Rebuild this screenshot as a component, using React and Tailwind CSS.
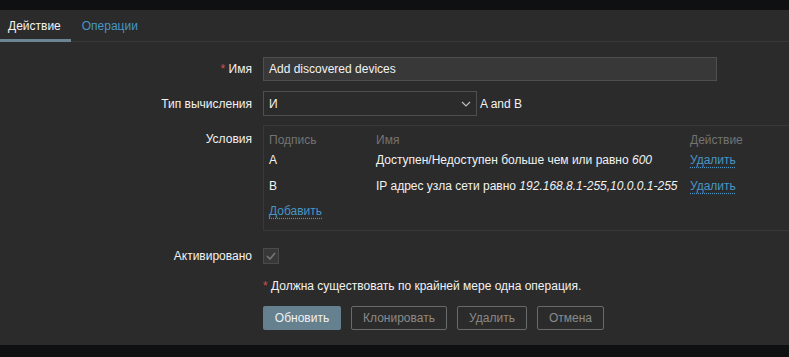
import React from "react";

const Link = ({ children }) => (
  <span className="text-[#4796c4] underline decoration-dotted underline-offset-[3px] decoration-[#4796c4]">{children}</span>
);

export default function App() {
  return (
    <div className="w-[789px] h-[357px] bg-[#0f1012] pt-[10px] overflow-hidden text-[12px] leading-[14px] text-[#f2f2f2]" style={{ fontFamily: '"Liberation Sans", Arial, sans-serif' }}>
      <div className="bg-[#2b2b2b] h-[335px]">
        {/* tabs */}
        <div className="flex h-[32px] border-b border-[#383838]">
          <div className="pl-[8px] pr-[10px] pt-[9px] border-b-[3px] border-[#6b8592] -mb-[1px] text-[#f2f2f2]">Действие</div>
          <div className="pl-[11px] pt-[9px] text-[#4796c4]">Операции</div>
        </div>

        <div className="pt-[15px]">
          {/* Имя */}
          <div className="flex items-center h-[24px]">
            <div className="w-[252px] text-right"><span className="text-[#d64e4e]">*</span> Имя</div>
            <div className="ml-[11px] w-[454px] h-[24px] bg-[#383838] border border-[#4f4f4f] px-[5px] flex items-center">Add discovered devices</div>
          </div>

          {/* Тип вычисления */}
          <div className="flex items-center h-[25px] mt-[10px]">
            <div className="w-[252px] text-right">Тип вычисления</div>
            <div className="ml-[11px] w-[214px] h-[25px] bg-[#2b2b2b] border border-[#4f4f4f] px-[5px] flex items-center justify-between">
              <span>И</span>
              <svg width="10" height="6" viewBox="0 0 10 6"><path d="M1 1l4 4 4-4" fill="none" stroke="#bdbdbd" strokeWidth="1.2" /></svg>
            </div>
            <div className="ml-[3px]">A and B</div>
          </div>

          {/* Условия */}
          <div className="flex mt-[9px]">
            <div className="w-[252px] text-right pt-[7px]">Условия</div>
            <div className="ml-[11px] flex-1 h-[106px] border-t border-l border-b border-[#383838] pl-[5px] pt-[7px]">
              <div className="flex text-[#737373] h-[14px]">
                <div className="w-[107px]">Подпись</div>
                <div className="w-[314px]">Имя</div>
                <div>Действие</div>
              </div>
              <div className="flex mt-[6px] h-[14px]">
                <div className="w-[107px]">A</div>
                <div className="w-[314px]">Доступен/Недоступен больше чем или равно <i>600</i></div>
                <div><Link>Удалить</Link></div>
              </div>
              <div className="flex mt-[12px] h-[14px]">
                <div className="w-[107px]">B</div>
                <div className="w-[314px]">IP адрес узла сети равно <i>192.168.8.1-255,10.0.0.1-255</i></div>
                <div><Link>Удалить</Link></div>
              </div>
              <div className="mt-[11px]"><Link>Добавить</Link></div>
            </div>
          </div>

          {/* Активировано */}
          <div className="flex items-center mt-[17px] h-[16px]">
            <div className="w-[252px] text-right">Активировано</div>
            <div className="ml-[11px] w-[16px] h-[16px] bg-[#383838] border border-[#4a4a4a] flex items-center justify-center">
              <svg width="10" height="8" viewBox="0 0 10 8"><path d="M1 4l3 3 5-6" fill="none" stroke="#767676" strokeWidth="1.6" /></svg>
            </div>
          </div>

          {/* warning */}
          <div className="ml-[263px] mt-[15px] h-[14px]"><span className="text-[#d64e4e]">*</span> Должна существовать по крайней мере одна операция.</div>

          {/* buttons */}
          <div className="ml-[263px] mt-[13px] flex gap-[10px]">
            <div className="h-[24px] w-[78px] bg-[#65808f] rounded-[2px] flex items-center justify-center text-[#f0f0f0]">Обновить</div>
            <div className="h-[24px] w-[96px] border border-[#6a6a6a] rounded-[2px] flex items-center justify-center text-[#8a8a8a]">Клонировать</div>
            <div className="h-[24px] w-[70px] border border-[#6a6a6a] rounded-[2px] flex items-center justify-center text-[#8a8a8a]">Удалить</div>
            <div className="h-[24px] w-[67px] border border-[#6a6a6a] rounded-[2px] flex items-center justify-center text-[#8a8a8a]">Отмена</div>
          </div>
        </div>
      </div>
    </div>
  );
}
